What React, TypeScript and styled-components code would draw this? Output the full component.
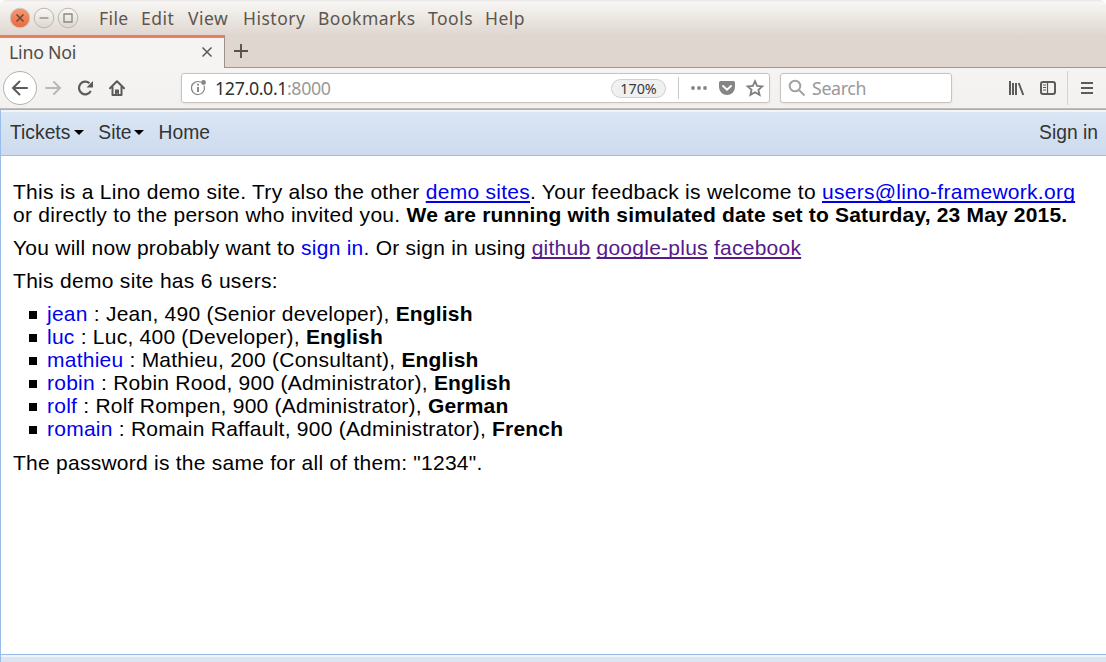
import React from "react";
import styled, { createGlobalStyle } from "styled-components";

const GlobalStyle = createGlobalStyle`
  * { box-sizing: border-box; }
  html, body { margin: 0; padding: 0; overflow: hidden; }
`;

const Window = styled.div`
  width: 1106px;
  height: 662px;
  display: flex;
  flex-direction: column;
  overflow: hidden;
  background: #fff;
  font-family: "Noto Sans", sans-serif;
`;

const Chrome = styled.header`
  flex: none;
  height: 68px;
  display: flex;
  flex-direction: column;
  background: linear-gradient(#e9e7e4 0, #f7f6f4 2px, #efebe7 14px, #dfd6cf 36px, #dfd6cf 100%);
  border-radius: 6px 6px 0 0;
`;

const MenuBar = styled.div`
  height: 35px;
  display: flex;
  align-items: center;
  padding-left: 9px;
`;

const Controls = styled.svg`
  display: block;
  width: 72px;
  height: 35px;
  margin-right: 18px;
`;

const Label = styled.span<{ $w: number; $size?: number; $ls?: number; $color?: string }>`
  flex: none;
  width: ${(p) => p.$w}px;
  font-size: ${(p) => p.$size ?? 17.5}px;
  letter-spacing: ${(p) => p.$ls ?? 0}px;
  color: ${(p) => p.$color ?? "#5d564e"};
  line-height: 24px;
  white-space: nowrap;
`;

const Tabs = styled.div`
  height: 33px;
  display: flex;
`;

const Tab = styled.div`
  width: 225px;
  height: 33px;
  display: flex;
  align-items: center;
  padding: 0 11px 2px 9px;
  justify-content: space-between;
  background: #f5f4f2;
  border-top: 3px solid #ea7f5a;
  border-right: 1px solid #9a928b;
`;

const TabRest = styled.div`
  flex: 1;
  border-bottom: 1px solid #9d958e;
  padding: 8px 0 0 8px;
`;

const NavBar = styled.div`
  flex: none;
  height: 41px;
  display: flex;
  align-items: center;
  background: linear-gradient(#f5f4f2, #f2f1ef);
  border-bottom: 1px solid #c2bcb5;
`;

const NavIcons = styled.svg`
  display: block;
  flex: none;
`;

const Field = styled.div<{ $w: number; $ml: number }>`
  flex: none;
  width: ${(p) => p.$w}px;
  height: 30px;
  margin-left: ${(p) => p.$ml}px;
  display: flex;
  align-items: center;
  background: #fff;
  border: 1px solid #c6c3c0;
  border-radius: 3px;
  box-shadow: 0 1px 3px rgba(0, 0, 0, 0.06);
`;

const Zoom = styled.span`
  width: 55px;
  height: 19px;
  margin-left: auto;
  border: 1px solid #cfcfcf;
  border-radius: 10px;
  background: #f0f0f0;
  color: #3a3a3a;
  font-size: 14.3px;
  line-height: 17px;
  text-align: center;
`;

const Page = styled.main`
  flex: 1;
  display: flex;
  flex-direction: column;
  border-left: 1px solid #99bce8;
  font-family: "Liberation Sans", Arial, sans-serif;
`;

const AppBar = styled.nav`
  flex: none;
  height: 47px;
  display: flex;
  align-items: center;
  padding: 1px 8px 0 9px;
  border-top: 1px solid #8db2e3;
  border-bottom: 1px solid #99bce8;
  background: linear-gradient(#f0f5fb 0, #f0f5fb 2px, #dae6f4 2px, #cddbee 100%);
`;

const AppItem = styled.span<{ $gap?: number }>`
  display: flex;
  align-items: center;
  margin-right: ${(p) => p.$gap ?? 0}px;
  color: #333;
  font-size: 19.3px;
  line-height: 24px;
  white-space: nowrap;
`;

const Caret = styled.i<{ $ml: number }>`
  margin: 0 0 1px ${(p) => p.$ml}px;
  border: 5px solid transparent;
  border-top-color: #000;
  border-bottom: 0;
`;

const Spacer = styled.div`
  flex: 1;
`;

const Body = styled.article`
  flex: 1;
  padding: 24px 12px 0;
  font-size: 21px;
  line-height: 23px;
  letter-spacing: 0.24px;
  color: #000;
  white-space: nowrap;

  b {
    letter-spacing: 0.18px;
  }
`;

const Para = styled.p<{ $ls?: number }>`
  margin: 0 0 10px;
  letter-spacing: ${(p) => p.$ls ?? 0.25}px;
`;

const Link = styled.a<{ $plain?: boolean; $visited?: boolean }>`
  color: ${(p) => (p.$visited ? "#551a8b" : "#0000ee")};
  text-decoration: ${(p) => (p.$plain ? "none" : "underline")};
  text-decoration-skip-ink: none;
`;

const Users = styled.ul`
  margin: 0 0 11px;
  padding: 0;
  list-style: none;
`;

const User = styled.li`
  height: 23px;
  display: flex;
  align-items: center;
`;

const Bullet = styled.i`
  width: 8px;
  height: 8px;
  margin: 3px 10px 0 16px;
  background: #000;
`;

const Footer = styled.footer`
  flex: none;
  height: 8px;
  border-top: 1px solid #99bce8;
  background: linear-gradient(#f0f5fb 0, #f0f5fb 2px, #dae6f4 2px);
`;

const menus = [
  { name: "File", w: 42, ls: 0.4 },
  { name: "Edit", w: 47, ls: 0.5 },
  { name: "View", w: 55, ls: 0.5 },
  { name: "History", w: 75, ls: 0.5 },
  { name: "Bookmarks", w: 110, ls: 0.5 },
  { name: "Tools", w: 57, ls: 0.5 },
  { name: "Help", w: 42, ls: 0.5 },
];

const users = [
  ["jean", "Jean, 490 (Senior developer)", "English"],
  ["luc", "Luc, 400 (Developer)", "English"],
  ["mathieu", "Mathieu, 200 (Consultant)", "English"],
  ["robin", "Robin Rood, 900 (Administrator)", "English"],
  ["rolf", "Rolf Rompen, 900 (Administrator)", "German"],
  ["romain", "Romain Raffault, 900 (Administrator)", "French"],
];

export default function App() {
  return (
    <>
      <GlobalStyle />
      <Window>
        <Chrome>
          <MenuBar>
            <Controls viewBox="9 0 72 35" fill="none">
              <defs>
                <linearGradient id="close" x1="0" y1="0" x2="0" y2="1">
                  <stop offset="0" stopColor="#f59a75" />
                  <stop offset="1" stopColor="#e9693b" />
                </linearGradient>
                <linearGradient id="btn" x1="0" y1="0" x2="0" y2="1">
                  <stop offset="0" stopColor="#faf9f8" />
                  <stop offset="1" stopColor="#dcd6d0" />
                </linearGradient>
              </defs>
              <circle cx="20" cy="18" r="9.8" fill="url(#close)" stroke="#cfc8c1" />
              <path d="M16.5 14.5l7 7M23.5 14.5l-7 7" stroke="#6b4638" strokeWidth="1.5" />
              <circle cx="44" cy="18" r="9.8" fill="url(#btn)" stroke="#bdb6af" />
              <path d="M39.5 18h9" stroke="#8d867f" strokeWidth="1.3" />
              <circle cx="68" cy="18" r="9.8" fill="url(#btn)" stroke="#bdb6af" />
              <path d="M64 14h8v8h-8z" stroke="#8d867f" strokeWidth="1.3" />
            </Controls>
            {menus.map((m) => (
              <Label key={m.name} $w={m.w} $ls={m.ls}>
                {m.name}
              </Label>
            ))}
          </MenuBar>
          <Tabs>
            <Tab>
              <Label $w={80} $size={17.8} $ls={-0.25} $color="#504c48">Lino Noi</Label>
              <NavIcons width="12" height="12" fill="none" stroke="#5c5955" strokeWidth="1.5">
                <path d="M1.5 1.5l9 9M10.5 1.5l-9 9" />
              </NavIcons>
            </Tab>
            <TabRest>
              <NavIcons width="16" height="16" stroke="#56524e" strokeWidth="1.9">
                <path d="M1 8h14M8 1v14" />
              </NavIcons>
            </TabRest>
          </Tabs>
        </Chrome>

        <NavBar>
          <NavIcons width="130" height="40" viewBox="0 68 130 40" fill="none" stroke="#5c5b59" strokeWidth="2">
            <circle cx="20" cy="88" r="16.5" fill="#fff" stroke="#b4b2af" strokeWidth="1" />
            <path d="M27 88H13M19.5 81.5L13 88l6.5 6.5" strokeLinecap="round" />
            <path d="M46 88h14M54 82l6 6-6 6" stroke="#bab8b6" strokeLinecap="round" />
            <path d="M90.800 91a6.300 6.300 0 1 1-1.300-7.700" strokeWidth="2.200" />
            <path d="M93 81v6.500h-6.500z" fill="#5c5b59" stroke="none" />
            <path d="M110 88.300L117 81.300l7 7M112.500 87v8h9v-8" strokeLinecap="round" strokeLinejoin="round" />
            <path d="M115 95.500v-6h4v6h-1.200v-2h-1v2z" fill="#5c5b59" stroke="none" />
          </NavIcons>
          <Field $w={589} $ml={51}>
            <NavIcons width="33" height="28" viewBox="182 74 33 28" fill="none" stroke="#858585" strokeWidth="1.200">
              <path d="M201 82.300a6.500 6.500 0 1 0 3 3.400" />
              <circle cx="203.500" cy="82.500" r="2.400" fill="#858585" stroke="none" />
              <path d="M198 87v5M198 83.800v1.800" strokeWidth="1.900" />
            </NavIcons>
            <Label $w={72} $size={17.8} $ls={-0.35} $color="#303030">127.0.0.1</Label>
            <Label $w={50} $size={17.8} $ls={-0.4} $color="#999">:8000</Label>
            <Zoom>170%</Zoom>
            <NavIcons width="103" height="28" viewBox="666 74 103 28" fill="none">
              <path d="M678.500 77v22" stroke="#c9c9c9" />
              <g fill="#858585">
                <circle cx="693" cy="88" r="1.900" />
                <circle cx="699" cy="88" r="1.900" />
                <circle cx="705" cy="88" r="1.900" />
                <path d="M720.500 81h13q1.500 0 1.500 1.500V87a8 8 0 0 1-16 0v-4.500q0-1.500 1.500-1.500z" />
              </g>
              <path d="M723 86l4 3.800 4-3.800" stroke="#fff" strokeWidth="1.900" strokeLinecap="round" />
              <path d="M755 81.200l2.100 4.700 5.200.5-3.900 3.400 1.200 5.100-4.600-2.700-4.600 2.700 1.200-5.100-3.900-3.400 5.200-.5z" stroke="#7e7e7e" strokeWidth="1.800" />
            </NavIcons>
          </Field>
          <Field $w={172} $ml={10}>
            <NavIcons width="31" height="28" viewBox="781 74 31 28" fill="none" stroke="#a2a2a2" strokeWidth="2">
              <circle cx="795" cy="86" r="5.300" />
              <path d="M799 90l5.500 5.500" />
            </NavIcons>
            <Label $w={58} $size={17.8} $ls={-0.35} $color="#999">Search</Label>
          </Field>
          <Spacer />
          <NavIcons width="106" height="40" viewBox="1000 68 106 40" fill="none" stroke="#5c5b59" strokeWidth="2">
            <path d="M1010 81v14M1013 83v12M1016 83v12M1018.700 83l4.600 12" strokeWidth="2" />
            <rect x="1041" y="82" width="14" height="12" rx="2" />
            <path d="M1047.500 82v12" strokeWidth="1.200" />
            <path d="M1043 85h3M1043 87.500h3M1043 90h3" strokeWidth="1" />
            <path d="M1067.500 71v34" stroke="#d5d3d0" strokeWidth="1" />
            <path d="M1081 83h12M1081 88h12M1081 93h12" />
          </NavIcons>
        </NavBar>

        <Page>
          <AppBar>
            <AppItem $gap={14}>Tickets<Caret $ml={4} /></AppItem>
            <AppItem $gap={15}>Site<Caret $ml={2} /></AppItem>
            <AppItem>Home</AppItem>
            <Spacer />
            <AppItem>Sign in</AppItem>
          </AppBar>
          <Body>
            <Para $ls={0.275}>
              This is a Lino demo site. Try also the other <Link>demo sites</Link>. Your feedback is welcome to{" "}
              <Link>users@lino-framework.org</Link>
              <br />
              or directly to the person who invited you.{" "}
              <b>We are running with simulated date set to Saturday, 23 May 2015.</b>
            </Para>
            <Para>
              You will now probably want to <Link $plain>sign in</Link>. Or sign in using{" "}
              <Link $visited>github</Link> <Link $visited>google-plus</Link> <Link $visited>facebook</Link>
            </Para>
            <Para $ls={0.3}>This demo site has 6 users:</Para>
            <Users>
              {users.map(([id, text, lang]) => (
                <User key={id}>
                  <Bullet />
                  <span>
                    <Link $plain>{id}</Link> : {text}, <b>{lang}</b>
                  </span>
                </User>
              ))}
            </Users>
            <Para>The password is the same for all of them: "1234".</Para>
          </Body>
          <Footer />
        </Page>
      </Window>
    </>
  );
}
